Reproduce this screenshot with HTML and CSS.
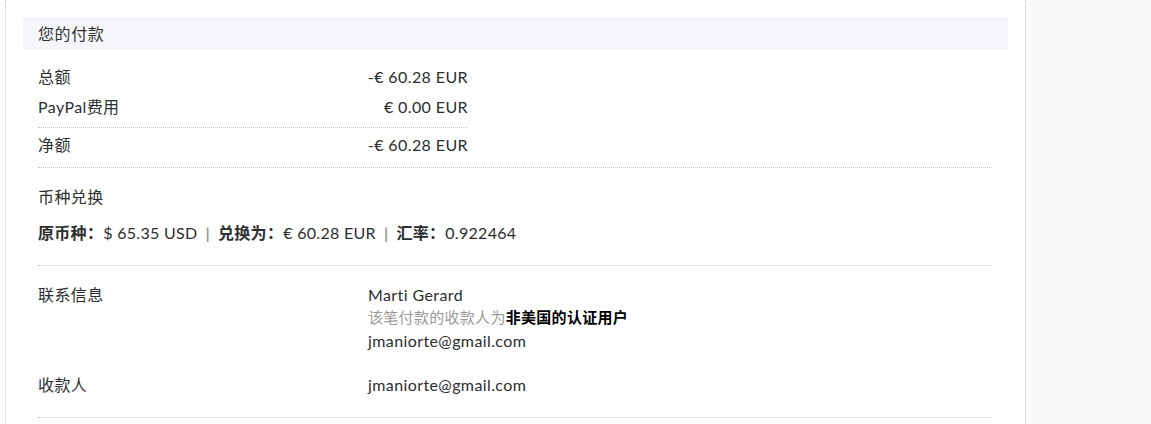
FILE: index.html
```html
<!DOCTYPE html>
<html lang="zh-CN">
<head>
    <meta charset="UTF-8">
    <meta name="viewport" content="width=device-width, initial-scale=1.0">
    <title>交易详情</title>
    <link rel="stylesheet" href="styles.css">
</head>
<body>
    <div class="page">
        <div class="gutter"></div>
        <div class="main">
            <div class="band">您的付款</div>

            <div class="section amounts">
                <div class="sum">
                    <div class="line">
                        <span>总额</span>
                        <span class="num">-€ 60.28 EUR</span>
                    </div>
                    <div class="line fee">
                        <span>PayPal费用</span>
                        <span class="num">€ 0.00 EUR</span>
                    </div>
                    <div class="line net">
                        <span>净额</span>
                        <span class="num">-€ 60.28 EUR</span>
                    </div>
                </div>
            </div>

            <div class="section convert">
                <div class="title">币种兑换</div>
                <div class="rate">
                    <b>原币种：</b>$ 65.35 USD<span class="sep">|</span><b>兑换为：</b>€ 60.28 EUR<span class="sep">|</span><b>汇率：</b>0.922464
                </div>
            </div>

            <div class="section contact">
                <div class="row">
                    <div class="label">联系信息</div>
                    <div class="value">
                        <div class="name">Marti Gerard</div>
                        <div class="note">该笔付款的收款人为<b>非美国的认证用户</b></div>
                        <div class="mail">jmaniorte@gmail.com</div>
                    </div>
                </div>
                <div class="row payee">
                    <div class="label">收款人</div>
                    <div class="value">jmaniorte@gmail.com</div>
                </div>
            </div>
        </div>
        <div class="side"></div>
    </div>
</body>
</html>
```

FILE: styles.css
```css
* { box-sizing: border-box; }

body {
    margin: 0;
    padding: 0;
    font-family: Lato, "Noto Sans CJK SC", sans-serif;
    font-size: 16px;
    letter-spacing: 0.4px;
    color: #2c2e2f;
    background: #fff;
}

.page { display: flex; height: 424px; overflow: hidden; }
.gutter { width: 5px; flex: none; }
.main {
    width: 1021px;
    flex: none;
    border-left: 1px dotted #c8c8c8;
    border-right: 1px dotted #c8c8c8;
    padding: 17px 17px 0 17px;
}
.side { flex: 1; background: #fafafa; }

.band {
    height: 33px;
    line-height: 33px;
    padding-left: 15px;
    background: #f5f6f9;
    color: #333;
    letter-spacing: 0.6px;
}

.section {
    margin: 0 16px 0 15px;
    border-bottom: 1px dotted #c8c8c8;
}

/* amounts */
.amounts { padding: 12px 0 7px; }
.sum { width: 430px; }
.line {
    display: flex;
    justify-content: space-between;
    height: 30px;
    padding: 5px 0;
    line-height: 20px;
}
.line.fee { height: 36px; padding-bottom: 10px; border-bottom: 1px dotted #c8c8c8; }
.line.net { height: 32px; padding-top: 7px; }

/* currency */
.convert { padding: 19px 0 22px; }
.convert .title { height: 20px; line-height: 20px; }
.rate { height: 20px; margin-top: 16px; line-height: 20px; white-space: nowrap; letter-spacing: 0.3px; }
.rate b { font-weight: 700; }
.sep { color: #999; font-weight: 700; margin: 0 8px; }

/* contact */
.contact { padding: 19px 0 22px; }
.row { display: flex; }
.label { width: 330px; flex: none; height: 20px; line-height: 20px; }
.value { line-height: 20px; }
.name { height: 20px; }
.note { height: 24px; line-height: 24px; font-size: 15px; letter-spacing: 0.3px; color: #9a9a9a; }
.note b { color: #000; }
.mail { height: 24px; line-height: 24px; }
.payee { margin-top: 22px; }
.payee .value { height: 20px; }
```
